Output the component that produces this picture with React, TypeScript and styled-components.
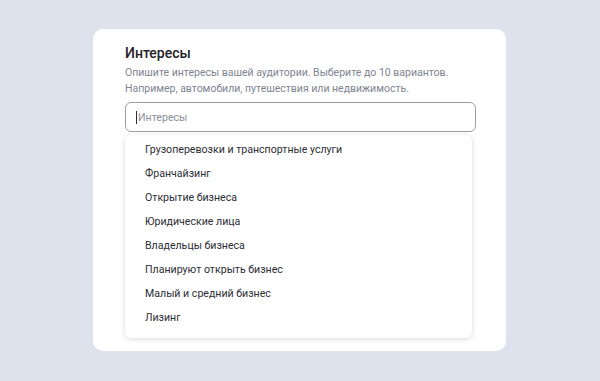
import React from "react";
import styled, { createGlobalStyle } from "styled-components";

const options = [
  "Грузоперевозки и транспортные услуги",
  "Франчайзинг",
  "Открытие бизнеса",
  "Юридические лица",
  "Владельцы бизнеса",
  "Планируют открыть бизнес",
  "Малый и средний бизнес",
  "Лизинг",
];

const GlobalStyle = createGlobalStyle`
  html, body {
    margin: 0;
    padding: 0;
    background: #dde2ec;
  }
  body {
    font-family: Roboto, "Noto Sans", sans-serif;
    color: #21242b;
  }
`;

const Page = styled.div`
  width: 600px;
  height: 381px;
  padding: 29px 0 0 93px;
  box-sizing: border-box;
`;

const Card = styled.div`
  width: 413px;
  height: 322px;
  box-sizing: border-box;
  background: #fff;
  border-radius: 10px;
  padding: 15px 30px 14px 32px;
  display: flex;
  flex-direction: column;
`;

const Title = styled.div`
  font-size: 14px;
  line-height: 18px;
  font-weight: 500;
  color: #1f2128;
`;

const Hint = styled.div`
  margin-top: 3px;
  font-size: 10.5px;
  line-height: 16px;
  color: #7e8492;
  white-space: nowrap;
`;

const Field = styled.div`
  flex-shrink: 0;
  margin-top: 5px;
  height: 30px;
  width: 351px;
  box-sizing: border-box;
  border: 1px solid #9a9ea6;
  border-radius: 6px;
  display: flex;
  align-items: center;
  padding-left: 10px;
  font-size: 10.6px;
  color: #8a8f99;
`;

const Caret = styled.span`
  width: 1px;
  height: 13px;
  background: #2a2d33;
  margin-right: 1px;
`;

const Menu = styled.div`
  margin-top: 3px;
  width: 347px;
  flex: 1;
  box-sizing: border-box;
  background: #fff;
  border-radius: 6px;
  box-shadow: 0 1px 5px rgba(30, 40, 60, 0.18);
  padding: 3px 0 8px 20px;
  display: flex;
  flex-direction: column;
`;

const Item = styled.div`
  height: 24px;
  line-height: 24px;
  font-size: 10.6px;
  color: #2b2e35;
`;

export default function App() {
  return (
    <Page>
      <GlobalStyle />
      <Card>
        <Title>Интересы</Title>
        <Hint>
          Опишите интересы вашей аудитории. Выберите до 10 вариантов.
          <br />
          Например, автомобили, путешествия или недвижимость.
        </Hint>
        <Field>
          <Caret />
          Интересы
        </Field>
        <Menu>
          {options.map((o) => (
            <Item key={o}>{o}</Item>
          ))}
        </Menu>
      </Card>
    </Page>
  );
}
